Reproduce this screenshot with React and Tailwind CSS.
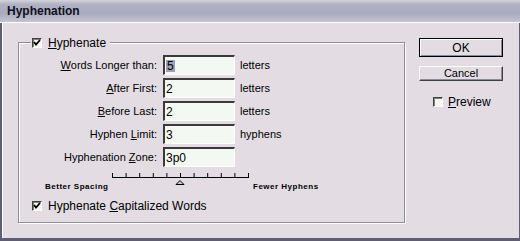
const U = ({ children }) => <span className="underline underline-offset-[1px]">{children}</span>;

function Check({ checked }) {
  return (
    <span className="inline-flex w-[10px] h-[10px] border border-t-[#404040] border-l-[#404040] border-b-[#ffffff] border-r-[#ffffff] bg-[#f6f6ee] items-center justify-center shadow-[inset_1px_1px_0_#808080]">
      {checked && (
        <svg width="8" height="8" viewBox="0 0 8 8">
          <path d="M1 3 L3 5.5 L7 1" stroke="#000" strokeWidth="1.8" fill="none" />
        </svg>
      )}
    </span>
  );
}

function Row({ label, value, unit, selected }) {
  return (
    <div className="flex items-center h-[20px]">
      <div className="w-[144px] text-right pr-[6px] leading-none">{label}</div>
      <div className="w-[72px] h-[20px] bg-[#f4f8f2] border-t-2 border-l-2 border-t-[#3a3a3a] border-l-[#3a3a3a] border-b border-r border-b-[#ffffff] border-r-[#ffffff] flex items-center pl-[1px] text-[12px] leading-none">
        {selected ? <span className="bg-[#a0a0b8] px-[1px]">{value}</span> : <span>{value}</span>}
      </div>
      <div className="pl-[5px] leading-none">{unit}</div>
    </div>
  );
}

export default function App() {
  const ticks = Array.from({ length: 11 });
  return (
    <div className="w-[520px] h-[241px] flex flex-col overflow-hidden bg-[#5f5d72] font-['Liberation_Sans',Arial,sans-serif] text-[11px] text-black">
      <div className="h-[22px] flex items-center pl-[7px] bg-[linear-gradient(to_bottom,#d4d4dc_0%,#b0b2c4_20%,#a8abbe_60%,#c4c4d0_100%)] text-[12px] font-bold text-[#101020]">
        Hyphenation
      </div>
      <div className="h-[1px] bg-white" />
      <div className="flex-1 ml-[2px] mr-[1px] mb-[3px] border-l border-white bg-[#e3dde3] flex">
        <div className="ml-[15px] mt-[19px] w-[387px] h-[181px] border border-[#8e8b9c] shadow-[inset_1px_1px_0_#ffffff,1px_1px_0_#ffffff] relative">
          <div className="absolute left-[12px] top-[-7px] bg-[#e3dde3] flex items-center gap-[6px] px-[1px] pr-[4px] h-[13px]">
            <Check checked />
            <span className="text-[12px] leading-none"><U>H</U>yphenate</span>
          </div>
          <div className="flex flex-col gap-[3px] pt-[12px]">
            <Row label={<><U>W</U>ords Longer than:</>} value="5" unit="letters" selected />
            <Row label={<><U>A</U>fter First:</>} value="2" unit="letters" />
            <Row label={<><U>B</U>efore Last:</>} value="2" unit="letters" />
            <Row label={<>Hyphen <U>L</U>imit:</>} value="3" unit="hyphens" />
            <Row label={<>Hyphenation <U>Z</U>one:</>} value="3p0" unit="" />
          </div>
          <div className="relative h-[28px] mt-[4px]">
            <svg className="absolute left-[93px] top-[0px]" width="140" height="16" viewBox="0 0 140 16">
              <line x1="0.5" y1="6.5" x2="137" y2="6.5" stroke="#000" />
              {ticks.map((_, i) => (
                <line key={i} x1={0.5 + i * 13.6} y1="2" x2={0.5 + i * 13.6} y2="7" stroke="#000" />
              ))}
              <path d="M64 13.5 L68 9.5 L72 13.5 Z" fill="#c8c8c8" stroke="#000" />
            </svg>
            <div className="absolute left-[26px] top-[12px] text-[8px] font-bold tracking-[0.5px] leading-none">Better Spacing</div>
            <div className="absolute left-[234px] top-[12px] text-[8px] font-bold tracking-[0.5px] leading-none">Fewer Hyphens</div>
          </div>
          <div className="flex items-center gap-[6px] ml-[13px] mt-[1px]">
            <Check checked />
            <span className="text-[12px] leading-none">Hyphenate <U>C</U>apitalized Words</span>
          </div>
        </div>
        <div className="ml-[14px] mt-[15px] flex flex-col w-[84px]">
          <div className="h-[19px] border border-black flex items-center justify-center shadow-[inset_1px_1px_0_#ffffff,inset_-1px_-1px_0_#8e8b9c] text-[12px]">OK</div>
          <div className="mt-[9px] h-[15px] border border-t-white border-l-white border-b-[#404040] border-r-[#404040] shadow-[inset_-1px_-1px_0_#8e8b9c] flex items-center justify-center">Cancel</div>
          <div className="mt-[15px] ml-[14px] flex items-center gap-[5px]">
            <Check />
            <span className="text-[12px] leading-none"><U>P</U>review</span>
          </div>
        </div>
      </div>
    </div>
  );
}
